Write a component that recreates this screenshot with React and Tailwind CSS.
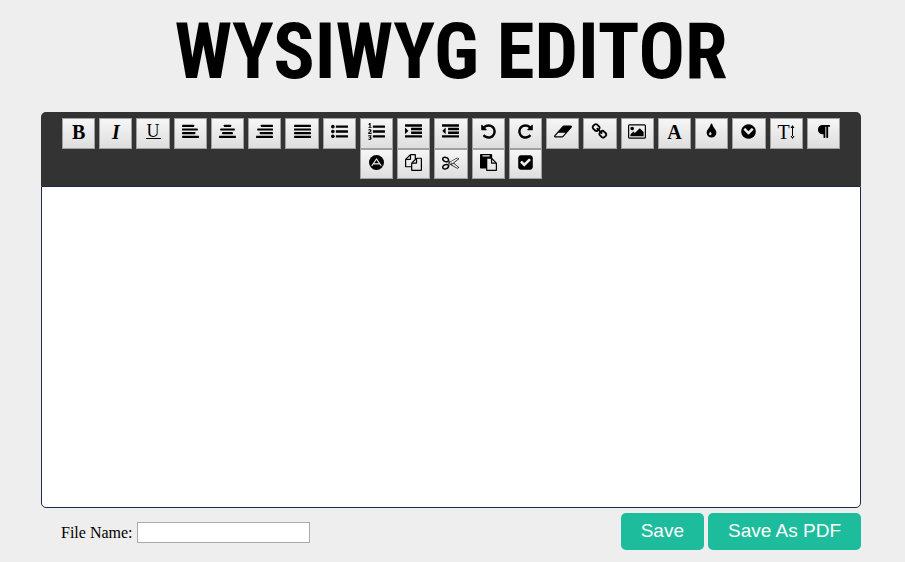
import React from "react";
import { FaParagraph } from "react-icons/fa";

const rows = (widths, align) =>
  widths.map((w, i) => {
    const x = align === "right" ? 1792 - w : align === "center" ? (1792 - w) / 2 : 0;
    return <rect key={i} x={x} y={192 + i * 384} width={w} height="224" rx="48" />;
  });

const Icon = ({ children, box = "0 0 1792 1792", className = "size-[17px]" }) => (
  <svg viewBox={box} className={className} fill="currentColor" aria-hidden="true">
    {children}
  </svg>
);

const Letter = ({ children, className = "" }) => (
  <span className={`font-['Liberation_Serif',serif] text-[20px] leading-[20px] ${className}`}>{children}</span>
);

const bars = "M1792 1312v192q0 13-9.5 22.5t-22.5 9.5h-1728q-13 0-22.5-9.5t-9.5-22.5v-192q0-13 9.5-22.5t22.5-9.5h1728q13 0 22.5 9.5t9.5 22.5zm0-384v192q0 13-9.5 22.5t-22.5 9.5h-1088q-13 0-22.5-9.5t-9.5-22.5v-192q0-13 9.5-22.5t22.5-9.5h1088q13 0 22.5 9.5t9.5 22.5zm0-384v192q0 13-9.5 22.5t-22.5 9.5h-1088q-13 0-22.5-9.5t-9.5-22.5v-192q0-13 9.5-22.5t22.5-9.5h1088q13 0 22.5 9.5t9.5 22.5zm0-384v192q0 13-9.5 22.5t-22.5 9.5h-1728q-13 0-22.5-9.5t-9.5-22.5v-192q0-13 9.5-22.5t22.5-9.5h1728q13 0 22.5 9.5t9.5 22.5z";
const undo = "M1664 896q0 156-61 298t-164 245-245 164-298 61q-172 0-327-72.5t-264-204.5q-7-10-6.5-22.5t8.5-20.5l137-138q10-9 25-9 16 2 23 12 73 95 179 147t225 52q104 0 198.5-40.5t163.5-109.5 109.5-163.5 40.5-198.5-40.5-198.5-109.5-163.5-163.5-109.5-198.5-40.5q-98 0-188 35.5t-160 101.5l137 138q31 30 14 69-17 40-59 40h-448q-26 0-45-19t-19-45v-448q0-42 40-59 39-17 69 14l130 129q107-101 244.5-156.5t284.5-55.5q156 0 298 61t245 164 164 245 61 298z";
const numerals = "M381 1620q0 80-54.5 126t-135.5 46q-106 0-172-66l57-88q49 45 106 45 29 0 50.5-14.5t21.5-42.5q0-64-105-56l-26-56q8-10 32.5-43.5t42.5-54 37-38.5v-1q-16 0-48.5 1t-48.5 1v53h-106v-152h333v88l-95 115q51 12 81 49t30 88zm2-627v159h-362q-6-36-6-54 0-51 23.5-93t56.5-68 66-47.5 56.5-43.5 23.5-45q0-25-14.5-38.5t-39.5-13.5q-46 0-81 58l-85-59q24-51 71.5-79.5t105.5-28.5q73 0 123 41.5t50 112.5q0 50-34 91.5t-75 64.5-75.5 50.5-35.5 52.5h127v-60h105zm1-580v99h-335v-99h107q0-41 .5-122t.5-121v-12h-2q-8 17-50 54l-71-76 136-127h106v404h108z";
const link = "M1520 1216q0-40-28-68l-208-208q-28-28-68-28-42 0-72 32 3 3 19 18.5t21.5 21.5 15 19 13 25.5 3.5 27.5q0 40-28 68t-68 28q-15 0-27.5-3.5t-25.5-13-19-15-21.5-21.5-18.5-19q-33 31-33 73 0 40 28 68l206 207q27 27 68 27 40 0 68-26l147-146q28-28 28-67zm-703-705q0-40-28-68l-206-207q-28-28-68-28-39 0-68 27l-147 146q-28 28-28 67 0 40 28 68l208 208q27 27 68 27 42 0 72-31-3-3-19-18.5t-21.5-21.5-15-19-13-25.5-3.5-27.5q0-40 28-68t68-28q15 0 27.5 3.5t25.5 13 19 15 21.5 21.5 18.5 19q33-31 33-73zm895 705q0 120-85 203l-147 146q-83 83-203 83-121 0-204-85l-206-207q-83-83-83-203 0-123 88-209l-88-88q-86 88-208 88-120 0-204-84l-208-208q-84-84-84-204t85-203l147-146q83-83 203-83 121 0 204 85l206 207q83 83 83 203 0 123-88 209l88 88q86-88 208-88 120 0 204 84l208 208q84 84 84 204z";
const picture = "M576 576q0 80-56 136t-136 56-136-56-56-136 56-136 136-56 136 56 56 136zm1024 384v448h-1408v-192l320-320 160 160 512-512zm96-704h-1600q-13 0-22.5 9.5t-9.5 22.5v1216q0 13 9.5 22.5t22.5 9.5h1600q13 0 22.5-9.5t9.5-22.5v-1216q0-13-9.5-22.5t-22.5-9.5zm160 32v1216q0 66-47 113t-113 47h-1600q-66 0-113-47t-47-113v-1216q0-66 47-113t113-47h1600q66 0 113 47t47 113z";
const drop = "M896 1152q0-36-20-69-1-1-15.5-22.5t-25.5-38-25-44-21-50.5q-4-16-21-16t-21 16q-7 23-21 50.5t-25 44-25.5 38-15.5 22.5q-20 33-20 69 0 53 37.5 90.5t90.5 37.5 90.5-37.5 37.5-90.5zm512-128q0 212-150 362t-362 150-362-150-150-362q0-145 81-275 6-9 62.5-90.5t101-151 99.5-178 83-201.5q9-30 34-47t51-17 51.5 17 33.5 47q28 93 83 201.5t99.5 178 101 151 62.5 90.5q81 127 81 275z";
const circleDown = "M941 1203l454-454q19-19 19-45t-19-45l-102-102q-19-19-45-19t-45 19l-307 307-307-307q-19-19-45-19t-45 19l-102 102q-19 19-19 45t19 45l454 454q19 19 45 19t45-19zm723-307q0 209-103 385.5t-279.5 279.5-385.5 103-385.5-103-279.5-279.5-103-385.5 103-385.5 279.5-279.5 385.5-103 385.5 103 279.5 279.5 103 385.5z";
const copy = "M1696 384q40 0 68 28t28 68v1216q0 40-28 68t-68 28h-960q-40 0-68-28t-28-68v-288h-544q-40 0-68-28t-28-68v-672q0-40 20-88t48-76l408-408q28-28 76-48t88-20h416q40 0 68 28t28 68v328q68-40 128-40h416zm-544 213l-299 299h299v-299zm-640-384l-299 299h299v-299zm196 647l316-316v-416h-384v416q0 40-28 68t-68 28h-416v640h512v-256q0-40 20-88t48-76zm956 804v-1152h-384v416q0 40-28 68t-68 28h-416v640h896z";
const cut = "M960 896q26 0 45 19t19 45-19 45-45 19-45-19-19-45 19-45 45-19zm300 64l507 398q28 20 25 56-5 35-35 51l-128 64q-13 7-29 7-17 0-31-8l-690-387-110 66q-8 4-12 5 14 49 10 97-7 77-56 147.5t-132 123.5q-132 84-277 84-136 0-222-78-90-84-79-207 7-76 56-147t131-124q132-84 278-84 83 0 151 31 9-13 22-22l122-73-122-73q-13-9-22-22-68 31-151 31-146 0-278-84-82-53-131-124t-56-147q-5-59 15.5-113t63.5-93q85-79 222-79 145 0 277 84 83 52 132 123t56 148q4 48-10 97 4 1 12 5l110 66 690-387q14-8 31-8 16 0 29 7l128 64q30 16 35 51 3 36-25 56zm-681-260q46-42 21-108t-106-117q-92-59-192-59-74 0-113 36-46 42-21 108t106 117q92 59 192 59 74 0 113-36zm-85 745q81-51 106-117t-21-108q-39-36-113-36-100 0-192 59-81 51-106 117t21 108q39 36 113 36 100 0 192-59zm178-613l96 58v-11q0-36 33-56l14-8-79-44-26 26q-3 3-10 11t-12 12q-2 2-4 3.5t-3 2.5zm224 224l96 32 736-576-128-64-768 431v113l-160 96 9 8q2 2 7 6 4 4 11 12t11 12l26 26zm704 416l128-64-520-408-177 138q-2 3-13 7z";
const paste = "M768 1664h896v-640h-416q-40 0-68-28t-28-68v-416h-384v1152zm256-1440v-64q0-13-9.5-22.5t-22.5-9.5h-704q-13 0-22.5 9.5t-9.5 22.5v64q0 13 9.5 22.5t22.5 9.5h704q13 0 22.5-9.5t9.5-22.5zm256 672h299l-299-299v299zm512 128v672q0 40-28 68t-68 28h-960q-40 0-68-28t-28-68v-160h-544q-40 0-68-28t-28-68v-1344q0-40 28-68t68-28h1088q40 0 68 28t28 68v328q21 13 36 28l408 408q28 28 48 76t20 88z";
const check = "M813 1299l614-614q19-19 19-45t-19-45l-102-102q-19-19-45-19t-45 19l-467 467-211-211q-19-19-45-19t-45 19l-102 102q-19 19-19 45t19 45l358 358q19 19 45 19t45-19zm851-883v960q0 119-84.5 203.5t-203.5 84.5h-960q-119 0-203.5-84.5t-84.5-203.5v-960q0-119 84.5-203.5t203.5-84.5h960q119 0 203.5 84.5t84.5 203.5z";
const eraser = "M832 1408l336-384h-768l-336 384h768zm1013-1077q15 34 9.5 71.5t-30.5 65.5l-896 1024q-38 44-96 44h-768q-38 0-69.5-20.5t-47.5-54.5q-15-34-9.5-71.5t30.5-65.5l896-1024q38-44 96-44h768q38 0 69.5 20.5t47.5 54.5z";

const listBars = [256, 768, 1280].map((y) => (
  <rect key={y} x="512" y={y} width="1280" height="256" rx="32" />
));

const tools = [
  ["Bold", <Letter className="font-bold">B</Letter>],
  ["Italic", <Letter className="font-bold italic">I</Letter>],
  ["Underline", <span className="border-b border-black px-px font-['Liberation_Serif',serif] text-[18px] leading-[14px]">U</span>],
  ["Align left", <Icon>{rows([1280, 1664, 1408, 1792])}</Icon>],
  ["Align center", <Icon>{rows([768, 1536, 1152, 1792], "center")}</Icon>],
  ["Align right", <Icon>{rows([1280, 1664, 1408, 1792], "right")}</Icon>],
  ["Justify", <Icon>{rows([1792, 1792, 1792, 1792])}</Icon>],
  ["Bulleted list", <Icon>{[384, 896, 1408].map((y) => <circle key={y} cx="192" cy={y} r="192" />)}{listBars}</Icon>],
  ["Numbered list", <Icon><path d={numerals} />{listBars}</Icon>],
  ["Indent", <Icon><path d={bars} /><path d="M352 832q0 14-9 23l-288 288q-9 9-23 9-13 0-22.5-9.5t-9.5-22.5v-576q0-13 9.5-22.5t22.5-9.5q14 0 23 9l288 288q9 9 9 23z" /></Icon>],
  ["Outdent", <Icon><path d={bars} /><path d="M384 544v576q0 13-9.5 22.5t-22.5 9.5q-14 0-23-9l-288-288q-9-9-9-23t9-23l288-288q9-9 23-9 13 0 22.5 9.5t9.5 22.5z" /></Icon>],
  ["Undo", <Icon><path d={undo} /></Icon>],
  ["Redo", <Icon><path d={undo} transform="matrix(-1 0 0 1 1792 0)" /></Icon>],
  ["Clear formatting", <Icon box="-64 0 1920 1792" className="h-[17px] w-[18px]"><path d={eraser} /></Icon>],
  ["Insert link", <Icon><path d={link} /></Icon>],
  ["Insert image", <Icon box="-64 0 1920 1792" className="h-[17px] w-[18px]"><path d={picture} /></Icon>],
  ["Font", <Letter className="font-bold">A</Letter>],
  ["Text color", <Icon><path d={drop} /></Icon>],
  ["More", <Icon><path d={circleDown} /></Icon>],
  ["Text size", <span className="flex items-center"><Letter>T</Letter><svg viewBox="0 0 5 14" className="h-[14px] w-[5px]" aria-hidden="true"><path d="M2 2h1v10h-1zM2.500 0L4.500 3H.5zM2.500 14L4.500 11H.5z" /></svg></span>],
  ["Paragraph", <FaParagraph className="h-[15px] w-[13px]" />],
  ["Highlight", <svg viewBox="0 0 15 15" className="size-[15px]" fill="none" aria-hidden="true"><circle cx="7.500" cy="7.500" r="7.500" fill="currentColor" /><path d="M3 10.500L7.500 4l4.500 6.500M5 8.800h5" stroke="#eee" strokeWidth="1.200" strokeLinecap="round" strokeLinejoin="round" /></svg>],
  ["Copy", <Icon><path d={copy} /></Icon>],
  ["Cut", <Icon><path d={cut} /></Icon>],
  ["Paste", <Icon><path d={paste} /></Icon>],
  ["Select all", <Icon><path d={check} /></Icon>],
];

export default function App() {
  return (
    <main className="min-h-screen bg-[#eee] pr-[44px] pl-[41px] text-black">
      <h1 className="h-28 text-center font-['Roboto_Condensed','Roboto',sans-serif] text-[77px] leading-[104px] font-bold whitespace-nowrap">
        WYSIWYG EDITOR
      </h1>
      <section>
        <div className="rounded-t-[5px] bg-[#333] px-[21px] pt-[6px] pb-[7px]">
          <div role="toolbar" aria-label="Formatting" className="grid h-[61px] grid-cols-[repeat(21,minmax(0,1fr))] grid-rows-2 gap-x-1">
            {tools.map(([name, icon], i) => (
              <button
                key={name}
                type="button"
                aria-label={name}
                title={name}
                className={`flex items-center justify-center border border-[#a0a0a0] bg-linear-to-b from-[#f6f6f6] to-[#dedede] pb-[3px] ${i === 21 ? "col-start-9" : ""}`}
              >
                {icon}
              </button>
            ))}
          </div>
        </div>
        <div contentEditable suppressContentEditableWarning role="textbox" aria-label="Document" className="h-[322px] rounded-b-[5px] border border-[#1f2949] bg-white px-2 outline-none" />
      </section>
      <footer className="flex items-start justify-between pt-[5px] pl-5">
        <div className="flex items-center gap-1 pt-[9px] font-['Liberation_Serif',serif] text-base leading-5">
          <label htmlFor="file-name">File Name:</label>
          <input id="file-name" type="text" className="h-[21px] w-[173px] border border-[#a9a9a9] bg-white px-px" />
        </div>
        <div className="flex gap-1 font-['Liberation_Sans',sans-serif] text-[19px] leading-[21px] text-white">
          <button type="button" className="rounded-[5px] bg-[#1dbc9c] px-5 pt-[7px] pb-[9px]">Save</button>
          <button type="button" className="rounded-[5px] bg-[#1dbc9c] px-5 pt-[7px] pb-[9px]">Save As PDF</button>
        </div>
      </footer>
    </main>
  );
}
